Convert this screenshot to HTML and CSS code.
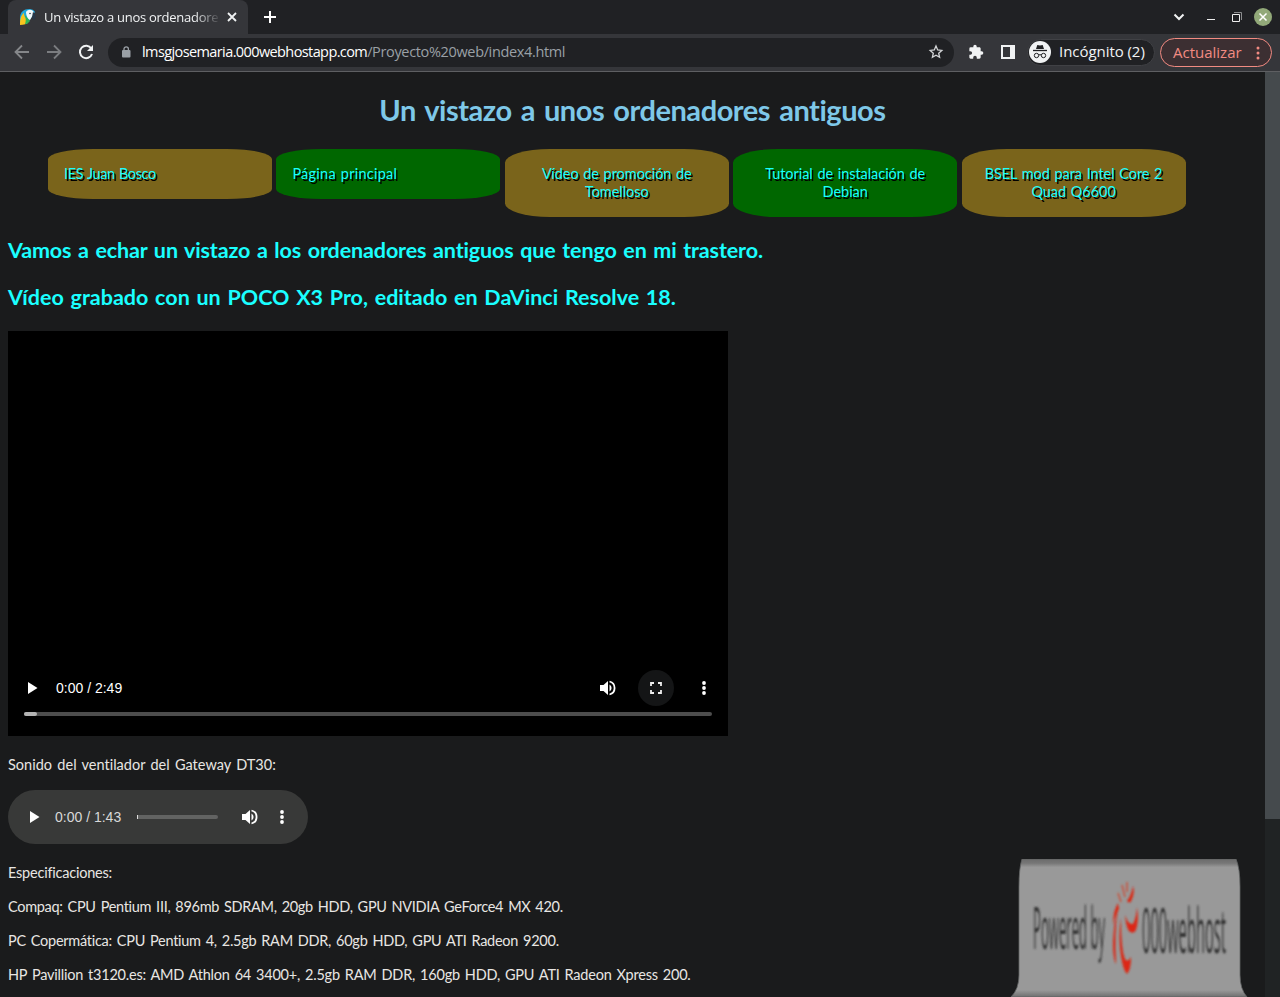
FILE: index.html
```html
<!DOCTYPE html>
<html lang="es">
<head>
<meta charset="utf-8">
<title>Un vistazo a unos ordenadores antiguos</title>
<link rel="stylesheet" href="styles.css">
</head>
<body>
<header class="tabs">
  <div class="tab">
    <svg class="favicon" width="16" height="16" viewBox="0 0 16 16"><path d="M0 15V9C0 3 4 0 9 0c3 0 5 1 6 3l-6 9-4 3z" fill="#20a9df"/><path d="M0 16C0 10 1 6 4 4c0 5 3 6 5 8-2 3-5 4-9 4z" fill="#f7c51e"/><path d="M5 6l5 6-3 3H5c1-3 1-5 0-9z" fill="#2fb457"/><path d="M6 3c2-3 7-3 8 1l-4 7C8 10 6 7 6 3z" fill="#f4fafb"/><path d="M13 3c3 2 3 6 1 8-2-1-2-4-1-8z" fill="#27384a"/><circle cx="10" cy="4.500" r=".8" fill="#27384a"/></svg>
    <span class="tab-title">Un vistazo a unos ordenadore</span>
    <svg width="10" height="10" viewBox="0 0 10 10" stroke="#f1f3f4" stroke-width="1.800"><path d="M1 1l8 8M9 1L1 9"/></svg>
  </div>
  <svg class="plus" width="14" height="14" viewBox="0 0 14 14" stroke="#fff" stroke-width="2"><path d="M7 1v12M1 7h12"/></svg>
  <div class="window-controls">
    <svg class="search-tabs" width="12" height="8" viewBox="0 0 12 8" fill="none" stroke="#f1f3f4" stroke-width="2"><path d="M1.500 1.500L6 6l4.500-4.500"/></svg>
    <svg class="minimize" width="8" height="10" viewBox="0 0 8 10"><path d="M0 7h8v1H0z" fill="#eee"/></svg>
    <svg class="restore" width="10" height="10" viewBox="0 0 10 10" fill="none"><path d="M2 .5h7.500V8" stroke="#8b8c8e"/><path d="M.5 2.500h7v7h-7z" stroke="#eee"/></svg>
    <svg width="18" height="18" viewBox="0 0 18 18"><circle cx="9" cy="9" r="9" fill="#92a979"/><path d="M5.500 5.500l7 7M12.500 5.500l-7 7" stroke="#fff" stroke-width="1.500"/></svg>
  </div>
</header>
<div class="toolbar">
  <div class="history">
    <svg width="16" height="16" viewBox="0 0 16 16" fill="none" stroke="#85878a" stroke-width="1.800"><path d="M15 8H2M8 1.500L1.500 8 8 14.500"/></svg>
    <svg width="16" height="16" viewBox="0 0 16 16" fill="none" stroke="#7b7d80" stroke-width="1.800"><path d="M1 8h13M8 1.500L14.500 8 8 14.500"/></svg>
    <svg width="16" height="16" viewBox="0 0 16 16"><path d="M13.300 4.500A6.200 6.200 0 1 0 14 10" fill="none" stroke="#f1f3f4" stroke-width="2"/><path d="M15 1v6H9z" fill="#f1f3f4"/></svg>
  </div>
  <div class="address">
    <svg class="lock" width="10" height="12" viewBox="0 0 10 12"><rect x="1" y="4" width="8.500" height="7.500" rx="1" fill="#9aa0a6"/><path d="M3 5V3a2.200 2.200 0 0 1 4.400 0v2" fill="none" stroke="#9aa0a6" stroke-width="1.300"/></svg>
    <span class="url"><span class="host">lmsgjosemaria.000webhostapp.com</span><span class="path">/Proyecto%20web/index4.html</span></span>
    <svg class="star" width="16" height="16" viewBox="0 0 16 16" fill="none" stroke="#d4d6d8" stroke-width="1.300"><path d="M8 2l1.700 4 4.100.4-3.100 2.800.9 4.100L8 11.200l-3.600 2.100.9-4.100-3.100-2.800L6.300 6z"/></svg>
  </div>
  <svg class="puzzle" width="16" height="16" viewBox="0 0 24 24" fill="#f1f3f4"><path d="M20.500 11H19V7c0-1.100-.9-2-2-2h-4V3.500a2.500 2.500 0 0 0-5 0V5H4a2 2 0 0 0-2 2v3.800h1.500a2.700 2.700 0 0 1 0 5.400H2V20c0 1.100.9 2 2 2h3.800v-1.500a2.700 2.700 0 0 1 5.400 0V22H17c1.100 0 2-.9 2-2v-4h1.500a2.500 2.500 0 0 0 0-5z"/></svg>
  <svg class="panel" width="14" height="14" viewBox="0 0 14 14"><path d="M0 0h14v14H0zM2 2v10h7V2z" fill="#f1f3f4" fill-rule="evenodd"/></svg>
  <div class="incognito">
    <svg width="22" height="22" viewBox="0 0 22 22"><circle cx="11" cy="11" r="11" fill="#f1f3f4"/><path d="M7 8l1.300-4 2.700.5 2.700-.5L15 8z" fill="#202124"/><path d="M4 9.500h14" stroke="#202124" stroke-width="1.300"/><g fill="none" stroke="#202124"><circle cx="7.500" cy="14.500" r="2.200"/><circle cx="14.500" cy="14.500" r="2.200"/><path d="M9.700 14q1.300-.7 2.600 0"/></g></svg>
    <span>Incógnito (2)</span>
  </div>
  <div class="update"><span>Actualizar</span>
    <svg width="4" height="14" viewBox="0 0 4 14" fill="#f28b82"><circle cx="2" cy="2" r="1.500"/><circle cx="2" cy="7" r="1.500"/><circle cx="2" cy="12" r="1.500"/></svg>
  </div>
</div>
<div class="viewport">
  <main class="page">
    <h1><span>Un vistazo a unos ordenadores antiguos</span></h1>
    <nav class="menu">
      <a class="gold start n1"><span>IES Juan Bosco</span></a>
      <a class="green start n2"><span>Página principal</span></a>
      <a class="gold n3"><span>Vídeo de promoción de<br>Tomelloso</span></a>
      <a class="green n4"><span>Tutorial de instalación de<br>Debian</span></a>
      <a class="gold n5"><span>BSEL mod para Intel Core 2<br>Quad Q6600</span></a>
    </nav>
    <h2 class="intro">Vamos a echar un vistazo a los ordenadores antiguos que tengo en mi trastero.</h2>
    <h2 class="credit">Vídeo grabado con un POCO X3 Pro, editado en DaVinci Resolve 18.</h2>
    <section class="video">
      <div class="video-controls">
        <svg width="10" height="12" viewBox="0 0 10 12"><path d="M0 0l9.500 6L0 12z" fill="#fff"/></svg>
        <span class="time">0:00 / 2:49</span>
        <svg class="volume" width="16" height="16" viewBox="0 0 16 16"><path d="M0 5v6h3.500L8 15V1L3.500 5z" fill="#fff"/><path d="M9.500 4.500a4 4 0 0 1 0 7z" fill="#fff"/><path d="M9.500 1.500a6.700 6.700 0 0 1 0 13" fill="none" stroke="#fff" stroke-width="1.800"/></svg>
        <span class="fullscreen"><svg width="12" height="12" viewBox="0 0 12 12" fill="none" stroke="#eee" stroke-width="1.800"><path d="M1 4V1h3M8 1h3v3M11 8v3H8M4 11H1V8"/></svg></span>
        <svg width="4" height="14" viewBox="0 0 4 14" fill="#fff"><circle cx="2" cy="2" r="1.900"/><circle cx="2" cy="7" r="1.900"/><circle cx="2" cy="12" r="1.900"/></svg>
      </div>
      <div class="video-track"><div class="buffered"></div></div>
    </section>
    <p class="sound">Sonido del ventilador del Gateway DT30:</p>
    <section class="audio">
      <svg width="10" height="12" viewBox="0 0 10 12"><path d="M0 0l9.500 6L0 12z" fill="#fff"/></svg>
      <span class="time">0:00 / 1:43</span>
      <div class="audio-track"></div>
      <svg class="volume" width="16" height="16" viewBox="0 0 16 16"><path d="M0 5v6h3.500L8 15V1L3.500 5z" fill="#fff"/><path d="M9.500 4.500a4 4 0 0 1 0 7z" fill="#fff"/><path d="M9.500 1.500a6.700 6.700 0 0 1 0 13" fill="none" stroke="#fff" stroke-width="1.800"/></svg>
      <svg width="4" height="14" viewBox="0 0 4 14" fill="#fff"><circle cx="2" cy="2" r="1.900"/><circle cx="2" cy="7" r="1.900"/><circle cx="2" cy="12" r="1.900"/></svg>
    </section>
    <p class="specs">Especificaciones:</p>
    <p class="compaq">Compaq: CPU Pentium III, 896mb SDRAM, 20gb HDD, GPU NVIDIA GeForce4 MX 420.</p>
    <p class="coper">PC Copermática: CPU Pentium 4, 2.5gb RAM DDR, 60gb HDD, GPU ATI Radeon 9200.</p>
    <p class="hp">HP Pavillion t3120.es: AMD Athlon 64 3400+, 2.5gb RAM DDR, 160gb HDD, GPU ATI Radeon Xpress 200.</p>
    <svg class="badge" width="240" height="138" viewBox="0 0 240 138">
      <defs>
        <linearGradient id="edge" x2="0" y2="1"><stop offset="0" stop-color="#6b6b6b"/><stop offset=".03" stop-color="#767676"/><stop offset=".06" stop-color="#999"/><stop offset=".95" stop-color="#999"/><stop offset=".99" stop-color="#777"/><stop offset="1" stop-color="#696969"/></linearGradient>
        <filter id="soft" x="-5%" y="-5%" width="110%" height="110%"><feGaussianBlur stdDeviation=".8"/></filter>
      </defs>
      <path d="M13 0H227Q231 9 231 28V116Q231 130 238 138H2Q10 130 10 116V28Q10 9 13 0z" fill="url(#edge)" stroke="#626464" stroke-width=".8"/>
      <g filter="url(#soft)">
        <text class="badge-text" transform="translate(24 90) scale(1 3.200)" font-size="18" textLength="72" lengthAdjust="spacingAndGlyphs">Powered by</text>
        <text class="badge-text brand" transform="translate(133 94) scale(1 3.500)" font-size="18" textLength="84" lengthAdjust="spacingAndGlyphs">000webhost</text>
        <g fill="#dc2813">
          <path d="M116 56Q119 66 124 65Q127 60 128 48Q130 62 127 71Q124 76 120 72Q117 68 116 56z"/>
          <path d="M112 59Q112 91 116 100Q119 104 122 98Q122 111 118 115Q114 111 112 97Q109 78 112 59z"/>
          <path d="M109 50Q105 72 107 105Q104 100 104 84Q105 61 109 50z"/>
          <path d="M109 44Q104 52 104 66Q106 56 110 50z"/>
          <path d="M124 27Q122 37 118 42Q121 46 123 40Q126 33 124 27z"/>
        </g>
        <path d="M118 23V33M113 26L116 38M109 34L112 43" fill="none" stroke="#c8543f" stroke-width="1.600"/>
      </g>
    </svg>
  </main>
  <div class="scrollbar"><div class="thumb"></div></div>
</div>
</body>
</html>
```

FILE: styles.css
```css
* { box-sizing: border-box; }
body { margin: 0; width: 1280px; height: 997px; overflow: hidden; background: #1a1b1c; color: #e8e6e3; font-family: Lato, sans-serif; font-variant-ligatures: none; }
svg { display: block; flex: none; }
span { white-space: nowrap; }
.tabs { height: 34px; background: #202124; display: flex; align-items: center; padding: 0 8px; }
.tab { width: 240px; height: 34px; display: flex; align-items: center; padding: 0 11px 0 12px; background: #35363a; border-radius: 8px 8px 0 0; color: #f1f3f4; font: 13px "Open Sans", sans-serif; }
.favicon { margin-right: 8px; }
.tab-title { width: 175px; margin-right: 8px; letter-spacing: -.27px; mask-image: linear-gradient(90deg, #000 150px, transparent 177px); }
.plus { margin-left: 15px; }
.window-controls { display: flex; align-items: center; margin-left: auto; }
.search-tabs { margin-right: 22px; }
.minimize { margin-right: 17px; }
.restore { margin-right: 12px; }
.toolbar { height: 38px; display: flex; align-items: center; padding: 2px 8px 2px 14px; background: #35363a; border-bottom: 1px solid #5e5f62; font: 15px "Open Sans", sans-serif; color: #f1f3f4; }
.history { display: flex; gap: 16px; width: 94px; margin-bottom: 1px; }
.address { width: 846px; height: 29px; display: flex; align-items: center; padding: 0 10px 0 13px; border-radius: 15px; background: #202124; }
.lock { margin-bottom: 2px; }
.url { margin-left: 11px; padding-bottom: 2px; font-size: 14.500px; }
.host { color: #fff; letter-spacing: -.6px; }
.path { color: #9aa0a6; letter-spacing: -.35px; }
.star { margin: 0 0 1px auto; }
.puzzle { margin: 0 0 2px 14px; }
.panel { margin: 0 0 1px 17px; }
.incognito { display: flex; align-items: center; width: 128px; height: 27px; margin: 0 0 1px 12px; padding-left: 1px; gap: 8px; border: 1px solid #404145; border-radius: 14px; background: #202124; letter-spacing: -.05px; }
.incognito span { padding-bottom: 2px; }
.update span { padding-bottom: 1px; }
.update { display: flex; align-items: center; justify-content: space-between; width: 112px; height: 29px; margin-left: 5px; padding: 0 11px 0 12px; border: 1px solid #f28b82; border-radius: 15px; background: #3c2f32; color: #f28b82; }
.viewport { display: flex; height: 925px; }
.page { position: relative; width: 1265px; padding: 18px 8px 0; background: #1a1b1c; }
h1 { height: 40px; margin: 0; color: #7ec8e8; font-size: 29px; line-height: 40px; font-weight: 700; text-align: center; letter-spacing: -.45px; word-spacing: 2.400px; }
.menu { display: flex; align-items: flex-start; gap: 4.400px; height: 68px; margin: 19px 0 0 40px; }
.menu a { width: 224px; padding: 16px; border-radius: 20%; text-align: center; color: #1affff; text-shadow: 1.500px 1.500px .5px #000; font-size: 14.500px; line-height: 18px; word-spacing: 1px; }
.menu .start { text-align: left; }
.menu .n1 { letter-spacing: -.4px; }
.n2 { letter-spacing: .25px; }
.n3, .n4, .n5 { letter-spacing: -.05px; }
.gold { background: #7a641b; }
.green { background: #006700; }
h2 { margin: 0; height: 30px; color: #1affff; font-size: 21.500px; line-height: 30px; font-weight: 700; white-space: nowrap; word-spacing: 1.500px; }
.intro { margin-top: 18px; letter-spacing: -.12px; }
.credit { margin-top: 17px; letter-spacing: 0; }
.video { width: 720px; height: 405px; margin-top: 19px; padding: 339px 16px 0; background: #000; }
.video-controls { display: flex; align-items: center; height: 36px; padding: 0 6px 0 4px; }
.time { font: 14px "Liberation Sans", sans-serif; margin-left: 18px; color: #fff; }
.volume { margin-left: auto; }
.fullscreen { display: grid; place-items: center; width: 36px; height: 36px; margin: 0 28px 0 22px; border-radius: 50%; background: #141516; }
.video-track { height: 4px; margin-top: 6px; border-radius: 2px; background: #4d4d4d; }
.buffered { width: 13px; height: 4px; border-radius: 2px; background: #b3b3b3; }
p { height: 18px; margin: 16px 0 0; font-size: 14.500px; line-height: 18px; white-space: nowrap; word-spacing: 1.500px; }
.sound { margin-top: 20px; letter-spacing: .02px; }
.audio { display: flex; align-items: center; width: 300px; height: 54px; margin-top: 16px; padding: 0 24px 0 22px; border-radius: 27px; background: #383938; }
.audio .time { margin-left: 15px; color: #d9d9d9; }
.audio-track { width: 81px; height: 4px; margin-left: 16px; border-left: 1px solid #ddd; border-radius: 0 2px 2px 0; background: #626362; }
.audio .volume { margin-right: 22px; }
.specs { margin-top: 20px; letter-spacing: -.22px; }
.compaq { letter-spacing: -.3px; }
.coper { letter-spacing: -.27px; }
.hp { letter-spacing: -.22px; }
.badge { position: absolute; right: 16px; bottom: 0; }
.badge-text { font-family: "Open Sans", sans-serif; fill: #343434; }
.brand { font-weight: 500; }
.scrollbar { width: 15px; background: #202324; }
.thumb { height: 747px; background: #454a4d; }
```
